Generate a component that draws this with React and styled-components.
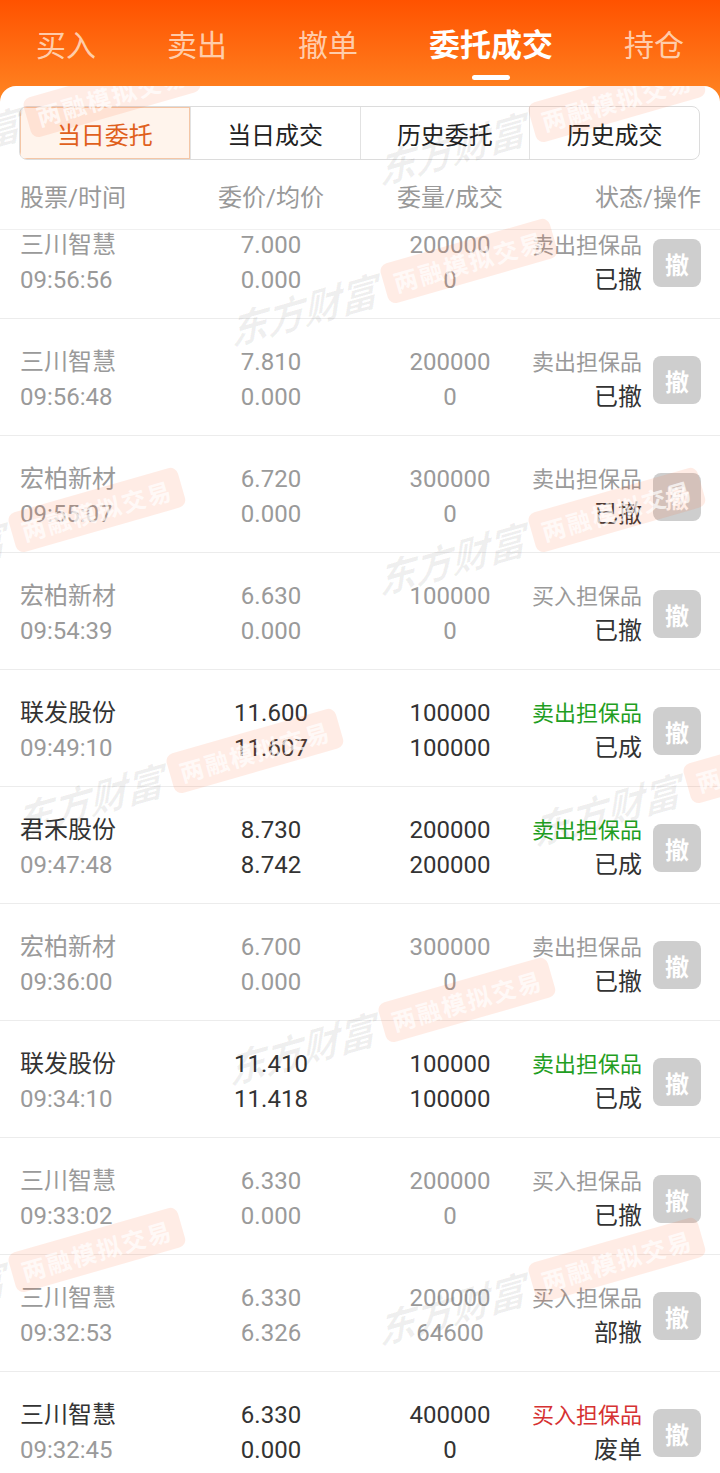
import React from 'react';
import styled, { createGlobalStyle } from 'styled-components';

const Global = createGlobalStyle`
  html, body { margin: 0; padding: 0; }
  body { font-family: Roboto, "Noto Sans CJK SC", sans-serif; background: #fff; }
  #root { height: 1473px; overflow: hidden; }
`;

const Page = styled.div`
  height: 1473px;
  display: flex;
  flex-direction: column;
  background: linear-gradient(180deg, #ff5200 0px, #ff8a26 110px) top / 100% 110px no-repeat, #fff;
  overflow: hidden;
`;

const TabBar = styled.nav`
  height: 86px;
  flex: none;
  display: flex;
  align-items: flex-start;
  padding-left: 36px;
  gap: 71px;
  box-sizing: border-box;
`;

const Tab = styled.div`
  display: flex;
  flex-direction: column;
  align-items: center;
  padding-top: 26px;
  font-size: ${p => (p.$active ? '31px' : '30px')};
  font-weight: ${p => (p.$active ? 700 : 400)};
  line-height: 40px;
  color: ${p => (p.$active ? '#fff' : 'rgba(255,232,214,0.8)')};
  white-space: nowrap;
`;

const Indicator = styled.span`
  margin-top: 9px;
  width: 38px;
  height: 5px;
  border-radius: 3px;
  background: #fff;
`;

const Card = styled.section`
  position: relative;
  flex: 1;
  min-height: 0;
  display: flex;
  flex-direction: column;
  background: #fff;
  border-radius: 16px 16px 0 0;
  overflow: hidden;
`;

const Segmented = styled.div`
  margin: 20px 20px 0 19px;
  height: 54px;
  display: grid;
  grid-template-columns: repeat(4, 1fr);
  border: 1px solid #dcdcdc;
  border-radius: 8px;
  overflow: hidden;
  box-sizing: border-box;
`;

const Segment = styled.div`
  display: flex;
  align-items: center;
  justify-content: center;
  font-size: 24px;
  color: ${p => (p.$active ? '#e0601c' : '#222')};
  background: ${p => (p.$active ? '#fff4ec' : 'transparent')};
  box-shadow: ${p => (p.$active ? 'inset 0 0 0 1px #f4c6a6' : 'none')};
  border-left: ${p => (p.$first ? 'none' : '1px solid #e2e2e2')};
`;

const columns = `
  display: grid;
  grid-template-columns: 150px 202px 156px minmax(0, 1fr) 48px;
  padding: 0 19px 0 20px;
`;

const HeadRow = styled.div`
  ${columns}
  padding-top: 21px;
  padding-bottom: 14px;
  border-bottom: 1px solid #f0f0f0;
  font-size: 24px;
  line-height: 34px;
  color: #999;
`;

const HeadCell = styled.div`
  text-align: ${p => p.$align || 'left'};
  grid-column: ${p => p.$span || 'auto'};
  white-space: nowrap;
`;

const List = styled.div`
  flex: 1;
  min-height: 0;
  overflow: hidden;
`;

const ListInner = styled.div`
  margin-top: -28px;
`;

const Row = styled.div`
  ${columns}
  padding-top: 26px;
  padding-bottom: 20px;
  border-bottom: 1px solid #ececec;
  align-items: center;
`;

const Cell = styled.div`
  display: flex;
  flex-direction: column;
  align-items: ${p => (p.$align === 'center' ? 'center' : p.$align === 'right' ? 'flex-end' : 'flex-start')};
  padding-right: ${p => (p.$align === 'right' ? '11px' : '0')};
`;

const toneColors = {
  muted: '#9a9a9a',
  dark: '#333',
  sell: '#1f9e22',
  fail: '#d63232',
};

const Line = styled.span`
  font-size: ${p => (p.$small ? '22px' : '24px')};
  line-height: 35px;
  color: ${p => toneColors[p.$tone]};
  white-space: nowrap;
`;

const CancelButton = styled.div`
  width: 48px;
  height: 48px;
  border-radius: 8px;
  background: #cecece;
  color: #fff;
  font-size: 24px;
  font-weight: 700;
  display: flex;
  align-items: center;
  justify-content: center;
`;

const WatermarkLayer = styled.div`
  position: absolute;
  inset: 0;
  pointer-events: none;
  overflow: hidden;
`;

const Mark = styled.div`
  position: absolute;
  display: flex;
  align-items: center;
  gap: 8px;
  transform: translate(-50%, -50%) rotate(-16deg);
  white-space: nowrap;
`;

const Brand = styled.span`
  font-family: "Noto Sans CJK SC", sans-serif;
  font-size: 38px;
  font-weight: 700;
  font-style: italic;
  color: rgba(0, 0, 0, 0.06);
  transform: skewX(-12deg);
`;

const Pill = styled.span`
  font-family: "Noto Sans CJK SC", sans-serif;
  font-size: 24px;
  font-weight: 700;
  letter-spacing: 2px;
  padding: 3px 10px;
  border-radius: 8px;
  background: rgba(255, 95, 40, 0.12);
  color: rgba(255, 255, 255, 0.72);
`;

const tabs = ['买入', '卖出', '撤单', '委托成交', '持仓'];
const segments = ['当日委托', '当日成交', '历史委托', '历史成交'];

const rows = [
  ['三川智慧', '09:56:56', '7.000', '0.000', '200000', '0', '卖出担保品', '已撤', 'muted'],
  ['三川智慧', '09:56:48', '7.810', '0.000', '200000', '0', '卖出担保品', '已撤', 'muted'],
  ['宏柏新材', '09:55:07', '6.720', '0.000', '300000', '0', '卖出担保品', '已撤', 'muted'],
  ['宏柏新材', '09:54:39', '6.630', '0.000', '100000', '0', '买入担保品', '已撤', 'muted'],
  ['联发股份', '09:49:10', '11.600', '11.607', '100000', '100000', '卖出担保品', '已成', 'sell'],
  ['君禾股份', '09:47:48', '8.730', '8.742', '200000', '200000', '卖出担保品', '已成', 'sell'],
  ['宏柏新材', '09:36:00', '6.700', '0.000', '300000', '0', '卖出担保品', '已撤', 'muted'],
  ['联发股份', '09:34:10', '11.410', '11.418', '100000', '100000', '卖出担保品', '已成', 'sell'],
  ['三川智慧', '09:33:02', '6.330', '0.000', '200000', '0', '买入担保品', '已撤', 'muted'],
  ['三川智慧', '09:32:53', '6.330', '6.326', '200000', '64600', '买入担保品', '部撤', 'muted'],
  ['三川智慧', '09:32:45', '6.330', '0.000', '400000', '0', '买入担保品', '废单', 'fail'],
];

// watermark unit centres in page coordinates
const marks = [
  [35, 117], [540, 122], [392, 283], [20, 532], [540, 532],
  [178, 773], [695, 783], [390, 1022], [20, 1272], [540, 1282],
];

export default function App() {
  return (
    <Page>
      <Global />
      <TabBar>
        {tabs.map(t => (
          <Tab key={t} $active={t === '委托成交'}>
            {t}
            {t === '委托成交' && <Indicator />}
          </Tab>
        ))}
      </TabBar>
      <Card>
        <Segmented>
          {segments.map((s, i) => (
            <Segment key={s} $active={i === 0} $first={i === 0}>{s}</Segment>
          ))}
        </Segmented>
        <HeadRow>
          <HeadCell>股票/时间</HeadCell>
          <HeadCell $align="center">委价/均价</HeadCell>
          <HeadCell $align="center">委量/成交</HeadCell>
          <HeadCell $align="right" $span="4 / 6">状态/操作</HeadCell>
        </HeadRow>
        <List>
          <ListInner>
            {rows.map(([name, time, price, avg, qty, deal, side, status, tone], i) => {
              const main = tone === 'muted' ? 'muted' : 'dark';
              return (
                <Row key={i}>
                  <Cell>
                    <Line $tone={main}>{name}</Line>
                    <Line $tone="muted">{time}</Line>
                  </Cell>
                  <Cell $align="center">
                    <Line $tone={main}>{price}</Line>
                    <Line $tone={main}>{avg}</Line>
                  </Cell>
                  <Cell $align="center">
                    <Line $tone={main}>{qty}</Line>
                    <Line $tone={main}>{deal}</Line>
                  </Cell>
                  <Cell $align="right">
                    <Line $small $tone={tone}>{side}</Line>
                    <Line $tone="dark">{status}</Line>
                  </Cell>
                  <CancelButton>撤</CancelButton>
                </Row>
              );
            })}
          </ListInner>
        </List>
        <WatermarkLayer>
          {marks.map(([x, y], i) => (
            <Mark key={i} style={{ left: x, top: y - 86 }}>
              <Brand>东方财富</Brand>
              <Pill>两融模拟交易</Pill>
            </Mark>
          ))}
        </WatermarkLayer>
      </Card>
    </Page>
  );
}
